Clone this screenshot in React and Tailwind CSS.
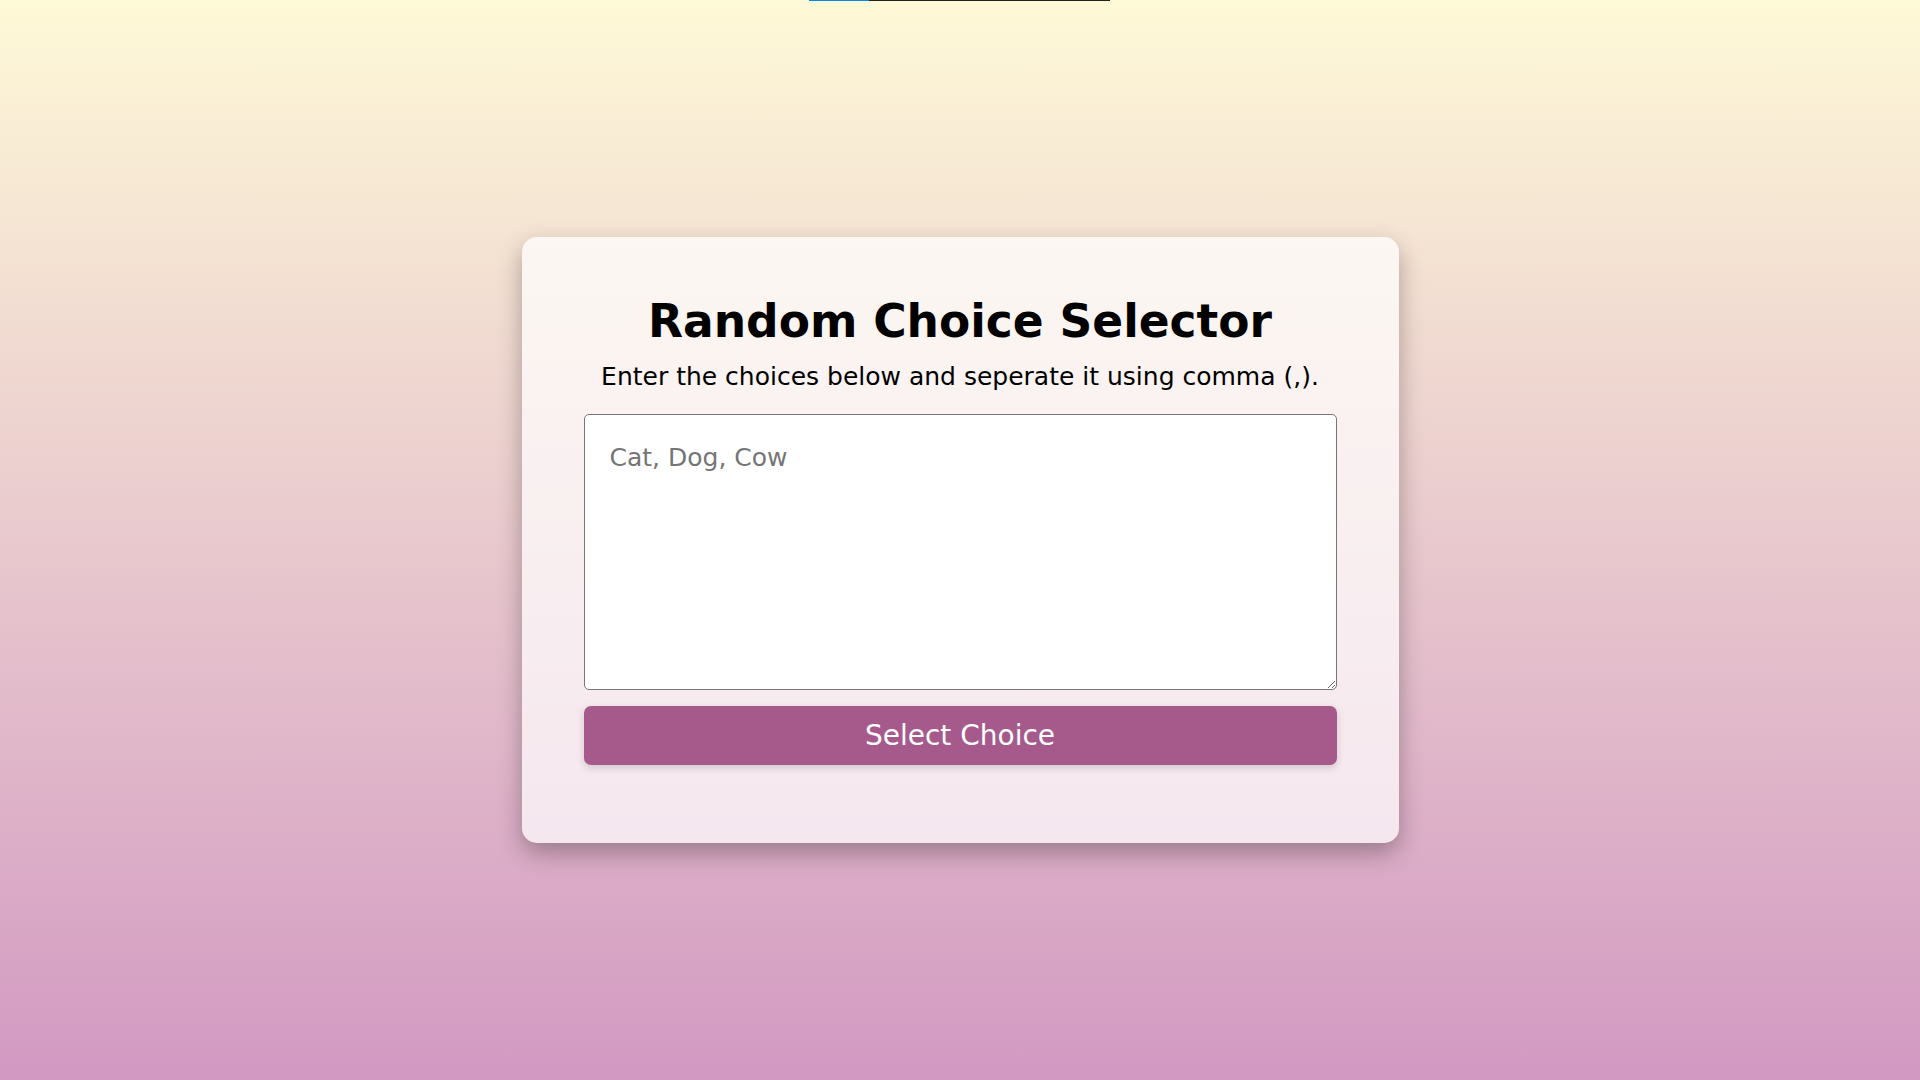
import { useState } from "react";

function App() {
  const [choices, setChoices] = useState("");

  return (
    <div
      className="relative min-h-screen w-full flex items-center justify-center bg-gradient-to-b from-[#fef9d7] to-[#d299c2]"
      style={{ fontFamily: '"DejaVu Sans", "Open Sans", sans-serif' }}
    >
      {/* thin bar at the very top */}
      <div className="absolute top-0 left-[809px] flex h-px w-[301px]">
        <div className="w-[60px] bg-[#0a84e0]" />
        <div className="flex-1 bg-[#222]" />
      </div>

      <div className="w-[877px] rounded-[15px] bg-white/70 px-[62px] pt-[57px] pb-[78px] shadow-[0_10px_25px_rgba(0,0,0,0.3)] flex flex-col items-center">
        <h1 className="text-[45.5px] leading-[56px] font-bold text-black">
          Random Choice Selector
        </h1>
        <p className="mt-[11px] text-[25px] leading-[32px] text-black">
          Enter the choices below and seperate it using comma (,).
        </p>

        <textarea
          value={choices}
          onChange={(e) => setChoices(e.target.value)}
          placeholder="Cat, Dog, Cow"
          className="mt-[21px] h-[276px] w-full rounded-[5px] border border-[#767676] bg-white px-[25px] py-[24px] text-[25px] text-black placeholder:text-[#757575] outline-none"
          style={{ fontFamily: '"DejaVu Sans", "Open Sans", sans-serif' }}
        />

        <button className="mt-[16px] h-[59px] w-full rounded-[7px] bg-[#a65a8c] text-[28px] text-white shadow-[0_3px_8px_rgba(0,0,0,0.15)]">
          Select Choice
        </button>
      </div>
    </div>
  );
}

export default App;
